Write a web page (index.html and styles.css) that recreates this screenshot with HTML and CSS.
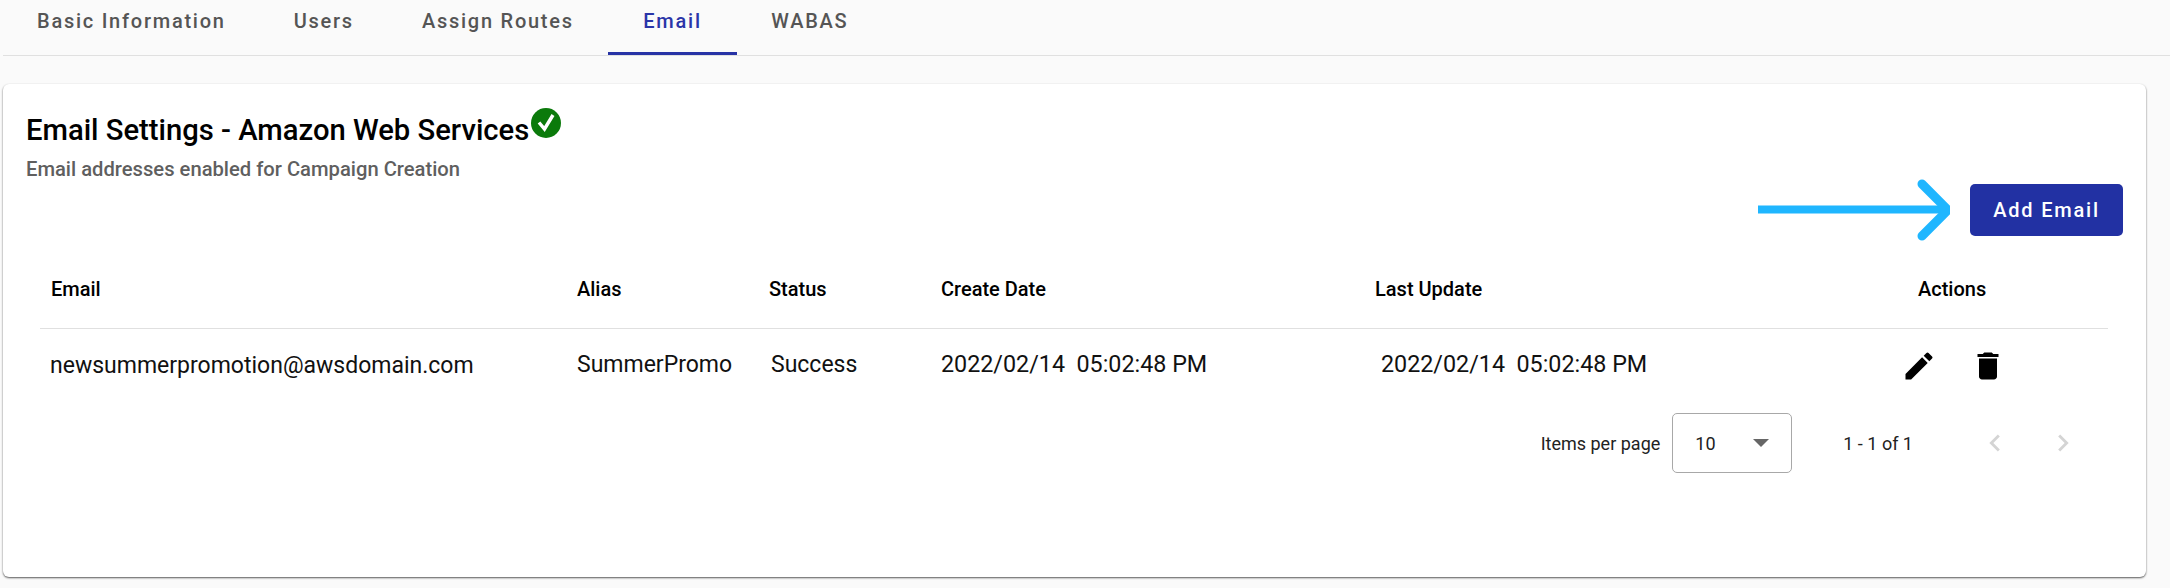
FILE: index.html
```html
<!DOCTYPE html>
<html lang="en">

<head>
    <meta charset="UTF-8">
    <meta name="viewport" content="width=device-width, initial-scale=1.0">
    <title>Email Settings</title>
    <link rel="stylesheet" href="styles.css">
</head>

<body>

    <div class="tabs">
        <div class="tab">Basic Information</div>
        <div class="tab">Users</div>
        <div class="tab">Assign Routes</div>
        <div class="tab active">Email</div>
        <div class="tab">WABAS</div>
    </div>

    <div class="card">
        <div class="card-head">
            <div>
                <h2>Email Settings - Amazon Web Services<svg class="check" viewBox="0 0 30 30">
                        <circle cx="15" cy="15" r="15" fill="#0b7a0b" />
                        <path d="M8 14.500l5.500 6.500 8.500-14" fill="none" stroke="#fff" stroke-width="3.4" />
                    </svg></h2>
                <p class="sub">Email addresses enabled for Campaign Creation</p>
            </div>
            <div class="head-action">
                <svg class="arrow" viewBox="0 0 192 62">
                    <path d="M0 30.500H186" fill="none" stroke="#1fb6ff" stroke-width="8" />
                    <path d="M164 5l26 26-26 26" fill="none" stroke="#1fb6ff" stroke-width="9" stroke-linecap="round" stroke-linejoin="round" />
                </svg>
                <button class="add-btn">Add Email</button>
            </div>
        </div>

        <div class="table">
            <div class="row head">
                <div>Email</div>
                <div>Alias</div>
                <div>Status</div>
                <div>Create Date</div>
                <div>Last Update</div>
                <div class="actions-head">Actions</div>
            </div>
            <div class="row body">
                <div class="low">newsummerpromotion@awsdomain.com</div>
                <div>SummerPromo</div>
                <div class="nudge-sm">Success</div>
                <div class="date">2022/02/14&nbsp; 05:02:48 PM</div>
                <div class="date nudge">2022/02/14&nbsp; 05:02:48 PM</div>
                <div class="actions">
                    <svg viewBox="0 0 24 24">
                        <path d="M3 17.250V21h3.750L17.810 9.940l-3.750-3.750L3 17.250zM20.710 7.040a1 1 0 0 0 0-1.410l-2.340-2.340a1 1 0 0 0-1.410 0l-1.830 1.830 3.750 3.750 1.830-1.830z" />
                    </svg>
                    <svg viewBox="0 0 24 24">
                        <path d="M6 19c0 1.100.9 2 2 2h8c1.100 0 2-.9 2-2V7H6v12zM19 4h-3.500l-1-1h-5l-1 1H5v2h14V4z" />
                    </svg>
                </div>
            </div>
        </div>

        <div class="pager">
            <span class="per-page">Items per page</span>
            <div class="select">
                <span>10</span>
                <i class="caret"></i>
            </div>
            <span class="range">1 - 1 of 1</span>
            <svg class="nav" viewBox="0 0 24 24">
                <path d="M15.410 7.410L14 6l-6 6 6 6 1.410-1.410L10.830 12z" />
            </svg>
            <svg class="nav" viewBox="0 0 24 24">
                <path d="M10 6L8.590 7.410 13.170 12l-4.580 4.590L10 18l6-6z" />
            </svg>
        </div>
    </div>

</body>

</html>
```

FILE: styles.css
```css
* {
    margin: 0;
    padding: 0;
    box-sizing: border-box;
}

body {
    background-color: #fafafa;
    font-family: Roboto, "Liberation Sans", sans-serif;
    color: #000;
    height: 588px;
    overflow: hidden;
}

.tabs {
    display: flex;
    height: 56px;
    margin-left: 3px;
    border-bottom: 1px solid #e0e0e0;
}

.tab {
    padding: 0 34px;
    height: 55px;
    line-height: 43px;
    font-size: 20px;
    font-weight: 500;
    letter-spacing: 1.750px;
    color: #555;
}

.tab.active {
    padding: 0 35.500px;
    color: #2a35a8;
    border-bottom: 3px solid #2733a5;
}

.card {
    margin: 28px 24px 0 3px;
    height: 493px;
    background-color: #fff;
    border-radius: 6px;
    box-shadow: 0 1px 2px rgba(0, 0, 0, 0.65);
    padding: 0 23px 0 23px;
}

.card-head {
    display: flex;
    justify-content: space-between;
    height: 151px;
}

h2 {
    margin-top: 24px;
    font-size: 29.200px;
    line-height: 40px;
    font-weight: 500;
    white-space: nowrap;
}

.check {
    width: 30px;
    height: 30px;
    margin-left: 2px;
    vertical-align: 2px;
}

.sub {
    font-size: 20.200px;
    line-height: 28px;
    margin-top: 5px;
    font-weight: 500;
    color: #5f5f5f;
}

.head-action {
    display: flex;
    align-items: center;
    gap: 20px;
    margin-top: 84px;
    height: 88px;
    padding-bottom: 4px;
}

.arrow {
    width: 192px;
    height: 62px;
}

.add-btn {
    width: 153px;
    height: 52px;
    background-color: #2231a3;
    color: #fff;
    border: none;
    border-radius: 5px;
    font-family: inherit;
    font-size: 20px;
    font-weight: 500;
    letter-spacing: 1.800px;
}

.table {
    margin: 0 15px 0 14px;
}

.row {
    display: grid;
    grid-template-columns: 526px 192px 172px 434px 432px 1fr;
    padding-left: 11px;
    align-items: center;
}

.row.head {
    height: 94px;
    font-size: 20px;
    font-weight: 500;
    border-bottom: 1px solid #e0e0e0;
    padding-top: 14px;
}

.row.body {
    height: 70px;
    font-size: 23px;
    color: #111;
}

.low {
    margin-top: 2px;
    margin-left: -1px;
}

.date {
    font-size: 23.300px;
}

.nudge-sm {
    padding-left: 2px;
}

.nudge {
    padding-left: 6px;
}

.actions-head {
    padding-left: 111px;
}

.actions {
    display: flex;
    gap: 33px;
    padding-left: 94px;
    margin-top: 3px;
}

.actions svg {
    width: 36px;
    height: 36px;
}

.pager {
    display: flex;
    align-items: center;
    justify-content: flex-end;
    height: 60px;
    margin-top: 14px;
    font-size: 18px;
    color: #222;
}

.per-page {
    margin-right: 12px;
}

.select {
    width: 120px;
    height: 60px;
    border: 1px solid #a8a8a8;
    border-radius: 5px;
    display: flex;
    align-items: center;
    justify-content: space-between;
    padding: 0 22px;
    font-size: 18px;
}

.caret {
    border-left: 8px solid transparent;
    border-right: 8px solid transparent;
    border-top: 8px solid #666;
}

.range {
    margin: 0 65px 0 51px;
}

.nav {
    width: 34px;
    height: 34px;
    fill: #d4d4d4;
    margin-right: 34px;
}

.nav:last-child {
    margin-right: 43px;
}
```
